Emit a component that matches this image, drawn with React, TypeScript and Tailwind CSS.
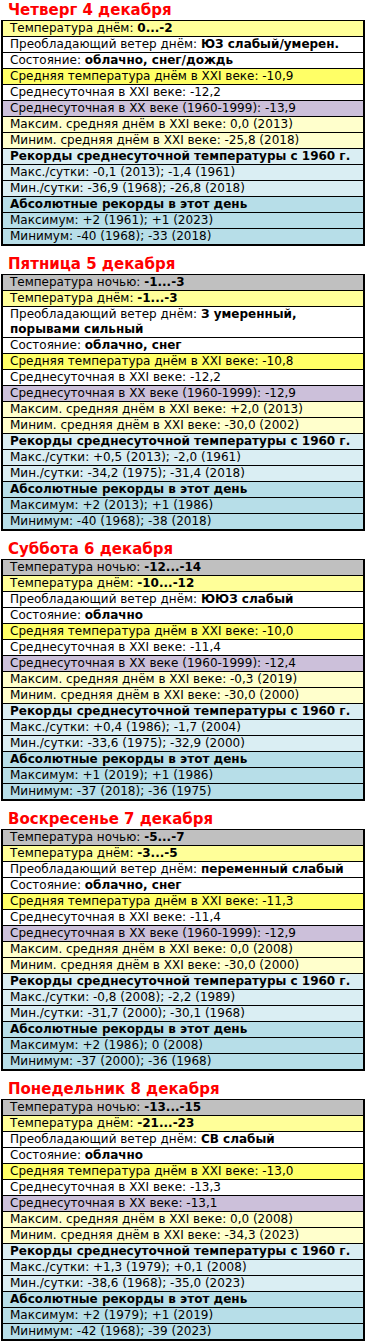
type Row = {
    label: string
    bold?: string
    tone: "night" | "day" | "white" | "avg" | "purple" | "cream" | "sky" | "skyHead" | "blue" | "blueHead"
}

type Day = {
    title: string
    rows: Row[]
}

const tones: Record<Row["tone"], string> = {
    night: "bg-[#c0c0c0]",
    day: "bg-[#ffff99]",
    white: "bg-white",
    avg: "bg-[#ffff66]",
    purple: "bg-[#ccc0da]",
    cream: "bg-[#ffffcc]",
    sky: "bg-[#daeef3]",
    skyHead: "bg-[#daeef3] font-bold",
    blue: "bg-[#b7dee8]",
    blueHead: "bg-[#b7dee8] font-bold",
}

const tail = (d: {
    avg: string; s21: string; s20: string; s20label?: string; max: string; min: string;
    rmax: string; rmin: string; amax: string; amin: string
}): Row[] => [
    { label: "Средняя температура днём в XXI веке: " + d.avg, tone: "avg" },
    { label: "Среднесуточная в XXI веке: " + d.s21, tone: "white" },
    { label: (d.s20label ?? "Среднесуточная в XX веке (1960-1999): ") + d.s20, tone: "purple" },
    { label: "Максим. средняя днём в XXI веке: " + d.max, tone: "cream" },
    { label: "Миним. средняя днём в XXI веке: " + d.min, tone: "cream" },
    { label: "Рекорды среднесуточной температуры с 1960 г.", tone: "skyHead" },
    { label: "Макс./сутки: " + d.rmax, tone: "sky" },
    { label: "Мин./сутки: " + d.rmin, tone: "sky" },
    { label: "Абсолютные рекорды в этот день", tone: "blueHead" },
    { label: "Максимум: " + d.amax, tone: "blue" },
    { label: "Минимум: " + d.amin, tone: "blue" },
]

const days: Day[] = [
    {
        title: "Четверг 4 декабря",
        rows: [
            { label: "Температура днём: ", bold: "0...-2", tone: "day" },
            { label: "Преобладающий ветер днём: ", bold: "ЮЗ слабый/умерен.", tone: "white" },
            { label: "Состояние: ", bold: "облачно, снег/дождь", tone: "white" },
            ...tail({
                avg: "-10,9", s21: "-12,2", s20: "-13,9", max: "0,0 (2013)", min: "-25,8 (2018)",
                rmax: "-0,1 (2013); -1,4 (1961)", rmin: "-36,9 (1968); -26,8 (2018)",
                amax: "+2 (1961); +1 (2023)", amin: "-40 (1968); -33 (2018)",
            }),
        ],
    },
    {
        title: "Пятница 5 декабря",
        rows: [
            { label: "Температура ночью: ", bold: "-1...-3", tone: "night" },
            { label: "Температура днём: ", bold: "-1...-3", tone: "day" },
            { label: "Преобладающий ветер днём: ", bold: "З умеренный, порывами сильный", tone: "white" },
            { label: "Состояние: ", bold: "облачно, снег", tone: "white" },
            ...tail({
                avg: "-10,8", s21: "-12,2", s20: "-12,9", max: "+2,0 (2013)", min: "-30,0 (2002)",
                rmax: "+0,5 (2013); -2,0 (1961)", rmin: "-34,2 (1975); -31,4 (2018)",
                amax: "+2 (2013); +1 (1986)", amin: "-40 (1968); -38 (2018)",
            }),
        ],
    },
    {
        title: "Суббота 6 декабря",
        rows: [
            { label: "Температура ночью: ", bold: "-12...-14", tone: "night" },
            { label: "Температура днём: ", bold: "-10...-12", tone: "day" },
            { label: "Преобладающий ветер днём: ", bold: "ЮЮЗ слабый", tone: "white" },
            { label: "Состояние: ", bold: "облачно", tone: "white" },
            ...tail({
                avg: "-10,0", s21: "-11,4", s20: "-12,4", max: "-0,3 (2019)", min: "-30,0 (2000)",
                rmax: "+0,4 (1986); -1,7 (2004)", rmin: "-33,6 (1975); -32,9 (2000)",
                amax: "+1 (2019); +1 (1986)", amin: "-37 (2018); -36 (1975)",
            }),
        ],
    },
    {
        title: "Воскресенье 7 декабря",
        rows: [
            { label: "Температура ночью: ", bold: "-5...-7", tone: "night" },
            { label: "Температура днём: ", bold: "-3...-5", tone: "day" },
            { label: "Преобладающий ветер днём: ", bold: "переменный слабый", tone: "white" },
            { label: "Состояние: ", bold: "облачно, снег", tone: "white" },
            ...tail({
                avg: "-11,3", s21: "-11,4", s20: "-12,9", max: "0,0 (2008)", min: "-30,0 (2000)",
                rmax: "-0,8 (2008); -2,2 (1989)", rmin: "-31,7 (2000); -30,1 (1968)",
                amax: "+2 (1986); 0 (2008)", amin: "-37 (2000); -36 (1968)",
            }),
        ],
    },
    {
        title: "Понедельник 8 декабря",
        rows: [
            { label: "Температура ночью: ", bold: "-13...-15", tone: "night" },
            { label: "Температура днём: ", bold: "-21...-23", tone: "day" },
            { label: "Преобладающий ветер днём: ", bold: "СВ слабый", tone: "white" },
            { label: "Состояние: ", bold: "облачно", tone: "white" },
            ...tail({
                avg: "-13,0", s21: "-13,3", s20: "-13,1", s20label: "Среднесуточная в XX веке: ",
                max: "0,0 (2008)", min: "-34,3 (2023)",
                rmax: "+1,3 (1979); +0,1 (2008)", rmin: "-38,6 (1968); -35,0 (2023)",
                amax: "+2 (1979); +1 (2019)", amin: "-42 (1968); -39 (2023)",
            }),
        ],
    },
]

const DayTable = ({ day, first }: { day: Day; first: boolean }) => (
    <section className={first ? "" : "mt-[9px]"}>
        <h2 className="pl-[8px] text-[15px] leading-[19px] font-bold text-[#ff0000]">{day.title}</h2>
        <div className="mx-[1px] border-x-2 border-b-2 border-t border-black">
            {day.rows.map((row, i) => (
                <div
                    key={i}
                    className={`${tones[row.tone]} ${i > 0 ? "border-t border-black" : ""} pl-[7px] pr-2 text-[12px] leading-[15px] text-black`}
                >
                    {row.label}
                    {row.bold && <b>{row.bold}</b>}
                </div>
            ))}
        </div>
    </section>
)

export default function App() {
    return (
        <div className="w-[366px] bg-white pt-[1px]" style={{ fontFamily: '"DejaVu Sans", Verdana, sans-serif' }}>
            {days.map((day, i) => (
                <DayTable key={day.title} day={day} first={i === 0} />
            ))}
        </div>
    )
}
